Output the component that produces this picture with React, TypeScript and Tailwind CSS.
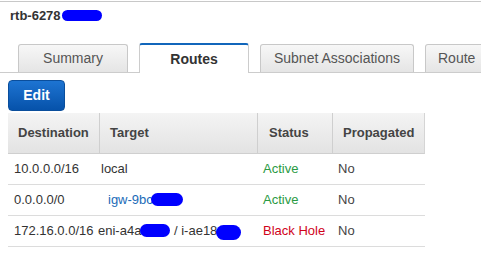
import React from "react";

interface Route {
  destination: string;
  target: React.ReactNode;
  targetPad: string;
  status: string;
  statusClass: string;
  propagated: string;
}

const Blob = ({ className }: { className: string }) => (
  <span className={`inline-block bg-[#0000ff] rounded-full align-middle ${className}`} />
);

const routes: Route[] = [
  {
    destination: "10.0.0.0/16",
    target: <span className="text-[#333]">local</span>,
    targetPad: "pl-[4px]",
    status: "Active",
    statusClass: "text-[#2a9a44]",
    propagated: "No",
  },
  {
    destination: "0.0.0.0/0",
    target: (
      <span className="text-[#1a6bb8] whitespace-nowrap">
        igw-9bc
        <Blob className="w-[32px] h-[13px] -ml-[2px] -mt-[2px]" />
      </span>
    ),
    targetPad: "pl-[11px]",
    status: "Active",
    statusClass: "text-[#2a9a44]",
    propagated: "No",
  },
  {
    destination: "172.16.0.0/16",
    target: (
      <span className="text-[#333] whitespace-nowrap">
        eni-a4a
        <Blob className="w-[30px] h-[13px] -ml-[1px] -mt-[2px]" />
        {" / i-ae18"}
        <Blob className="w-[25px] h-[15px] -ml-[1px] mt-[2px]" />
      </span>
    ),
    targetPad: "pl-[1px]",
    status: "Black Hole",
    statusClass: "text-[#d0021b]",
    propagated: "No",
  },
];

const tabs = [
  { label: "Summary", active: false, width: "w-[110px] justify-center" },
  { label: "Routes", active: true, width: "w-[110px] justify-center" },
  { label: "Subnet Associations", active: false, width: "w-[154px] justify-center" },
  { label: "Route", active: false, width: "w-[110px] justify-start" },
];

const App = () => {
  return (
    <div className="w-[481px] h-[253px] bg-white overflow-hidden font-['Liberation_Sans',Arial,sans-serif]">
      {/* top rule */}
      <div className="mt-px h-px bg-[#c8c8c8]" />

      {/* Title */}
      <div className="pt-[6px] pl-[10px] text-[13px] leading-[15px] font-bold text-[#333] flex items-center">
        <span>rtb-6278</span>
        <Blob className="w-[40px] h-[11px] ml-[1px]" />
      </div>

      {/* Tabs */}
      <div className="mt-[20px] h-[30px] flex items-end gap-[11px] pl-[18px] border-b border-[#ccc] whitespace-nowrap">
        {tabs.map((tab) =>
          tab.active ? (
            <div
              key={tab.label}
              className={`${tab.width} shrink-0 h-[30px] -mb-px bg-white border-t-2 border-t-[#1166bb] border-x border-x-[#ccc] rounded-t-[3px] flex items-center text-[14px] font-bold text-[#333]`}
            >
              {tab.label}
            </div>
          ) : (
            <div
              key={tab.label}
              className={`${tab.width} shrink-0 h-[28px] px-[12px] bg-gradient-to-b from-[#f7f7f7] to-[#e5e5e5] border-t border-x border-[#c8c8c8] rounded-t-[3px] flex items-center text-[14px] text-[#555] overflow-hidden`}
            >
              {tab.label}
            </div>
          )
        )}
      </div>

      {/* Edit button */}
      <div className="mt-[7px] ml-[8px]">
        <button className="w-[57px] h-[31px] rounded-[4px] bg-gradient-to-b from-[#1d74d2] to-[#0652aa] border border-[#0a4e9c] text-white text-[14px] font-bold flex items-center justify-center">
          Edit
        </button>
      </div>

      {/* Table */}
      <div className="mt-[2px] ml-[8px] w-[417px] text-[13px]">
        <div className="grid grid-cols-[91px_158px_75px_93px] h-[41px] bg-gradient-to-b from-[#f4f4f4] to-[#e3e3e3] border-b border-[#cfcfcf] border-r border-r-[#d5d5d5] font-bold text-[#444]">
          <div className="flex items-center pl-[10px]">Destination</div>
          <div className="flex items-center pl-[10px] border-l border-[#cfcfcf]">Target</div>
          <div className="flex items-center pl-[11px] border-l border-[#cfcfcf]">Status</div>
          <div className="flex items-center pl-[10px] border-l border-[#cfcfcf]">Propagated</div>
        </div>
        {routes.map((r) => (
          <div
            key={r.destination}
            className="grid grid-cols-[89px_160px_75px_93px] h-[31px] border-b border-[#dcdcdc] text-[#333] whitespace-nowrap"
          >
            <div className="flex items-center pl-[6px]">{r.destination}</div>
            <div className={`flex items-center ${r.targetPad}`}>{r.target}</div>
            <div className={`flex items-center pl-[6px] ${r.statusClass}`}>{r.status}</div>
            <div className="flex items-center pl-[6px] text-[#444]">{r.propagated}</div>
          </div>
        ))}
      </div>
    </div>
  );
};

export default App;
